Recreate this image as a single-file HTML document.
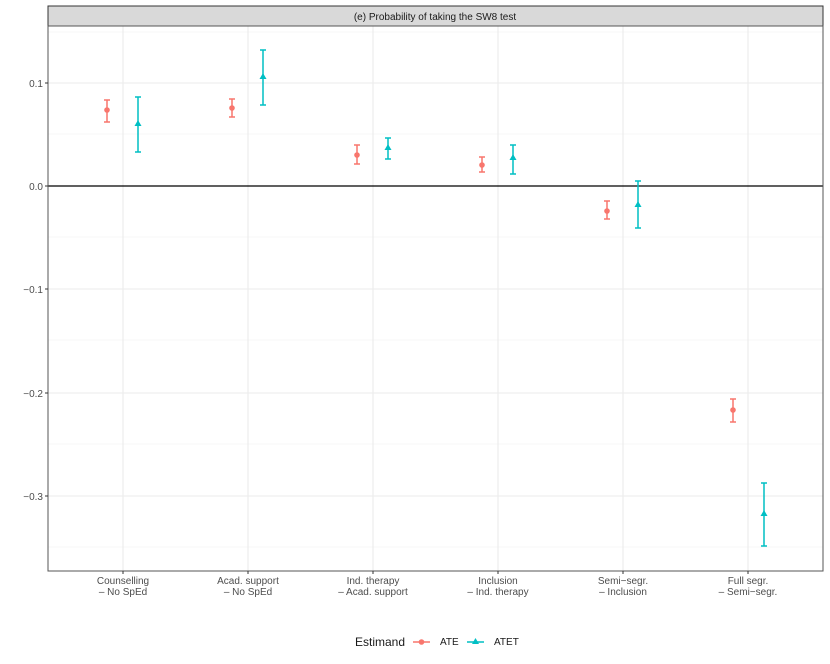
<!DOCTYPE html><html><head><style>body{margin:0;background:#fff}svg{display:block;font-family:"Liberation Sans",sans-serif}</style></head><body>
<svg width="830" height="664" viewBox="0 0 830 664">
<rect x="48" y="6" width="775" height="20" fill="#d9d9d9" stroke="#333" stroke-width="1"/>
<text x="435" y="20" font-size="10" text-anchor="middle" fill="#1a1a1a">(e) Probability of taking the SW8 test</text>
<g stroke="#f0f0f0" stroke-width="0.6">
<line x1="48" x2="823" y1="32" y2="32"/><line x1="48" x2="823" y1="134" y2="134"/><line x1="48" x2="823" y1="237" y2="237"/><line x1="48" x2="823" y1="340" y2="340"/><line x1="48" x2="823" y1="444" y2="444"/><line x1="48" x2="823" y1="547" y2="547"/>
</g>
<g stroke="#ebebeb" stroke-width="1.1">
<line x1="48" x2="823" y1="83" y2="83"/><line x1="48" x2="823" y1="289" y2="289"/><line x1="48" x2="823" y1="393" y2="393"/><line x1="48" x2="823" y1="496" y2="496"/>
<line x1="123" x2="123" y1="26" y2="571"/><line x1="248" x2="248" y1="26" y2="571"/><line x1="373" x2="373" y1="26" y2="571"/><line x1="498" x2="498" y1="26" y2="571"/><line x1="623" x2="623" y1="26" y2="571"/><line x1="748" x2="748" y1="26" y2="571"/>
</g>
<line x1="48" x2="823" y1="186" y2="186" stroke="#000" stroke-width="1.2"/>
<rect x="48" y="26" width="775" height="545" fill="none" stroke="#555" stroke-width="1"/>
<g stroke="#333" stroke-width="1"><line x1="45" x2="48" y1="83" y2="83"/><line x1="45" x2="48" y1="186" y2="186"/><line x1="45" x2="48" y1="289" y2="289"/><line x1="45" x2="48" y1="393" y2="393"/><line x1="45" x2="48" y1="496" y2="496"/>
<line x1="123" x2="123" y1="571" y2="574"/><line x1="248" x2="248" y1="571" y2="574"/><line x1="373" x2="373" y1="571" y2="574"/><line x1="498" x2="498" y1="571" y2="574"/><line x1="623" x2="623" y1="571" y2="574"/><line x1="748" x2="748" y1="571" y2="574"/></g>
<g font-size="10" fill="#4d4d4d" text-anchor="end"><text x="43" y="87">0.1</text><text x="43" y="190">0.0</text><text x="43" y="293">−0.1</text><text x="43" y="397">−0.2</text><text x="43" y="500">−0.3</text></g>
<g font-size="10" fill="#4d4d4d" text-anchor="middle">
<text x="123" y="584">Counselling</text><text x="123" y="595">– No SpEd</text>
<text x="248" y="584">Acad. support</text><text x="248" y="595">– No SpEd</text>
<text x="373" y="584">Ind. therapy</text><text x="373" y="595">– Acad. support</text>
<text x="498" y="584">Inclusion</text><text x="498" y="595">– Ind. therapy</text>
<text x="623" y="584">Semi−segr.</text><text x="623" y="595">– Inclusion</text>
<text x="748" y="584">Full segr.</text><text x="748" y="595">– Semi−segr.</text>
</g>
<g stroke="#F8766D" stroke-width="1.5" fill="#F8766D">
<path d="M107 100V122M104 100H110M104 122H110"/><circle cx="107" cy="110" r="2.8" stroke="none"/>
<path d="M232 99V117M229 99H235M229 117H235"/><circle cx="232" cy="108" r="2.8" stroke="none"/>
<path d="M357 145V164M354 145H360M354 164H360"/><circle cx="357" cy="155" r="2.8" stroke="none"/>
<path d="M482 157V172M479 157H485M479 172H485"/><circle cx="482" cy="165" r="2.8" stroke="none"/>
<path d="M607 201V219M604 201H610M604 219H610"/><circle cx="607" cy="211" r="2.8" stroke="none"/>
<path d="M733 399V422M730 399H736M730 422H736"/><circle cx="733" cy="410" r="2.8" stroke="none"/>
</g>
<g stroke="#00BFC4" stroke-width="1.5" fill="#00BFC4">
<path d="M138 97V152M135 97H141M135 152H141"/><path d="M138 120l3.5 6h-7z" stroke="none"/>
<path d="M263 50V105M260 50H266M260 105H266"/><path d="M263 73l3.5 6h-7z" stroke="none"/>
<path d="M388 138V159M385 138H391M385 159H391"/><path d="M388 144l3.5 6h-7z" stroke="none"/>
<path d="M513 145V174M510 145H516M510 174H516"/><path d="M513 154l3.5 6h-7z" stroke="none"/>
<path d="M638 181V228M635 181H641M635 228H641"/><path d="M638 201l3.5 6h-7z" stroke="none"/>
<path d="M764 483V546M761 483H767M761 546H767"/><path d="M764 510l3.5 6h-7z" stroke="none"/>
</g>
<text x="355" y="646" font-size="12" fill="#1a1a1a">Estimand</text>
<line x1="413" x2="430" y1="642" y2="642" stroke="#F8766D" stroke-width="1.5"/><circle cx="421.5" cy="642" r="2.8" fill="#F8766D"/>
<text x="440" y="645" font-size="10" fill="#1a1a1a">ATE</text>
<line x1="467" x2="484" y1="642" y2="642" stroke="#00BFC4" stroke-width="1.5"/><path d="M475.5 638l3.5 6h-7z" fill="#00BFC4"/>
<text x="494" y="645" font-size="10" fill="#1a1a1a">ATET</text>
</svg>
</body></html>
